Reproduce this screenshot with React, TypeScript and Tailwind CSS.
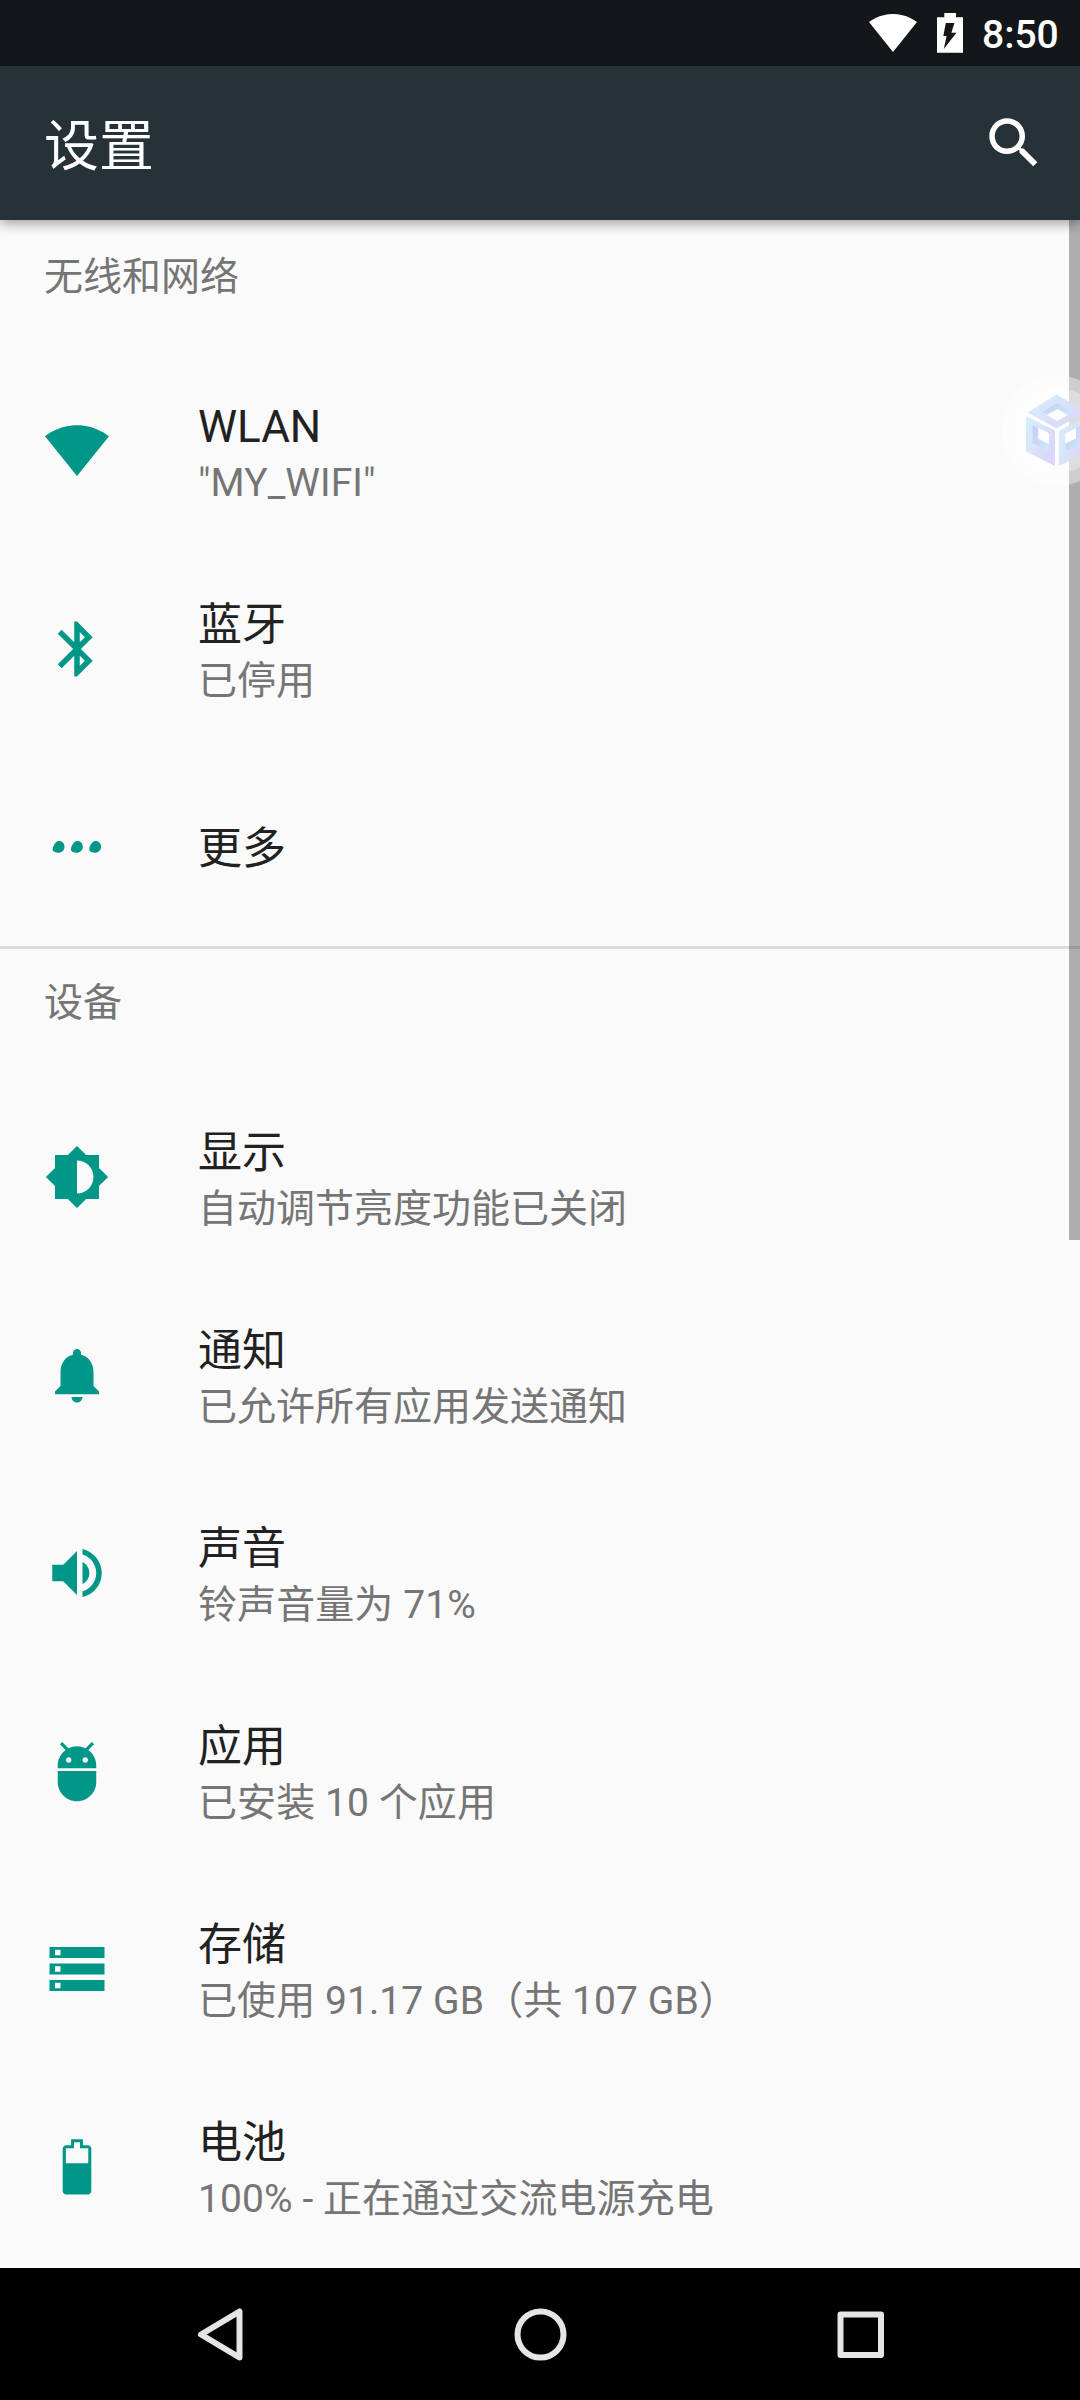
import React from 'react';

const P = {
  wifi: 'M12.01 21.49L23.64 7c-.45-.34-4.93-4-11.64-4C5.28 3 .81 6.66.36 7l11.63 14.49.01.01.01-.01z',
  bluetooth:
    'M17.71 7.71L12 2h-1v7.59L6.41 5 5 6.41 10.59 12 5 17.59 6.41 19 11 14.41V22h1l5.71-5.71-4.3-4.29 4.3-4.29zM13 5.83l1.88 1.88L13 9.59V5.83zm1.88 10.46L13 18.17v-3.76l1.88 1.88z',
  display:
    'M20 15.31L23.31 12 20 8.69V4h-4.69L12 .69 8.69 4H4v4.69L.69 12 4 15.31V20h4.69L12 23.31 15.31 20H20v-4.69zM12 18V6c3.31 0 6 2.69 6 6s-2.69 6-6 6z',
  more: 'M5.3 9.8C6.5 9.600 7.450 10.600 7.450 11.850S6.600 14.050 5.500 14.050C4.300 14.050 3.150 13.800 3.150 12.900C3.150 11.700 4.200 9.950 5.300 9.800zM11.950 9.800C13.150 9.600 14.100 10.600 14.100 11.850S13.250 14.050 12.150 14.050C10.950 14.050 9.800 13.800 9.800 12.900C9.800 11.700 10.850 9.950 11.950 9.800zM18.600 9.800C19.800 9.600 20.750 10.600 20.750 11.850S19.900 14.050 18.800 14.050C17.600 14.050 16.450 13.800 16.450 12.900C16.450 11.700 17.500 9.950 18.600 9.800z',
  bell: 'M12 22c1.1 0 2-.9 2-2h-4c0 1.1.89 2 2 2zm6-6v-5c0-3.07-1.64-5.64-4.5-6.32V4c0-.83-.67-1.5-1.5-1.5s-1.5.67-1.5 1.5v.68C7.63 5.36 6 7.92 6 11v5l-2 2v1h16v-1l-2-2z',
  sound:
    'M3 9v6h4l5 5V4L7 9H3zm13.5 3c0-1.77-1.02-3.29-2.5-4.03v8.05c1.48-.73 2.5-2.25 2.5-4.02zM14 3.23v2.06c2.89.86 5 3.54 5 6.71s-2.11 5.85-5 6.71v2.06c4.01-.91 7-4.49 7-8.77s-2.99-7.86-7-8.77z',
  apps: 'M5 16c0 3.87 3.13 7 7 7s7-3.13 7-7v-4H5v4zM16.12 4.37l2.1-2.1-.82-.83-2.3 2.31C14.16 3.28 13.12 3 12 3s-2.16.28-3.09.75L6.6 1.44l-.82.83 2.1 2.1C6.14 5.64 5 7.68 5 10v1h14v-1c0-2.32-1.14-4.36-2.88-5.63zM9 9c-.55 0-1-.45-1-1s.45-1 1-1 1 .45 1 1-.45 1-1 1zm6 0c-.55 0-1-.45-1-1s.45-1 1-1 1 .45 1 1-.45 1-1 1z',
  storage:
    'M2 20h20v-4H2v4zm2-3h2v2H4v-2zM2 4v4h20V4H2zm4 3H4V5h2v2zm-4 7h20v-4H2v4zm2-3h2v2H4v-2z',
  battery:
    'M15.9 4.1h-1.75V1.9h-4.3v2.2H8.1c-.7 0-1.3.6-1.3 1.3v15.4c0 .7.6 1.2 1.3 1.2h7.8c.7 0 1.3-.5 1.3-1.2V5.4c0-.7-.6-1.3-1.3-1.3zM16.1 10.6H7.95V5.2h2.95V3h2.2v2.2h3z',
};

type Item = { icon: keyof typeof P; title: string; sub?: string };
type Section = { name: string; items: Item[] };

const sections: Section[] = [
  {
    name: '无线和网络',
    items: [
      { icon: 'wifi', title: 'WLAN', sub: '"MY_WIFI"' },
      { icon: 'bluetooth', title: '蓝牙', sub: '已停用' },
      { icon: 'more', title: '更多' },
    ],
  },
  {
    name: '设备',
    items: [
      { icon: 'display', title: '显示', sub: '自动调节亮度功能已关闭' },
      { icon: 'bell', title: '通知', sub: '已允许所有应用发送通知' },
      { icon: 'sound', title: '声音', sub: '铃声音量为 71%' },
      { icon: 'apps', title: '应用', sub: '已安装 10 个应用' },
      { icon: 'storage', title: '存储', sub: '已使用 91.17 GB（共 107 GB）' },
      { icon: 'battery', title: '电池', sub: '100% - 正在通过交流电源充电' },
    ],
  },
];

function Row({ icon, title, sub }: Item) {
  // Summaries with Latin text carry a hair of extra tracking.
  const latin = !!sub && /[0-9A-Z]/.test(sub);
  return (
    <li className="flex h-[198px] pl-[44px]">
      <svg
        viewBox="0 0 24 24"
        className={icon === 'wifi' ? 'mt-[65px] size-[66px] shrink-0 fill-[#009688]' : 'mt-[66px] size-[66px] shrink-0 fill-[#009688]'}
      >
        <path fillRule="evenodd" d={P[icon]} />
      </svg>
      <div className={sub ? 'ml-[88px] pt-[49px]' : 'ml-[88px] pt-[75px]'}>
        <div className="text-[44px] leading-[52px] whitespace-nowrap text-[#212121]">{title}</div>
        {sub && (
          <div
            className={
              latin
                ? 'mt-[7px] text-[39px] leading-[46px] tracking-[0.08px] whitespace-nowrap text-[#757575]'
                : 'mt-[7px] text-[39px] leading-[46px] whitespace-nowrap text-[#757575]'
            }
          >
            {sub}
          </div>
        )}
      </div>
    </li>
  );
}

function StatusBar() {
  return (
    <div className="flex h-[66px] shrink-0 justify-end bg-[#131719] pr-[23px] text-white">
      <svg viewBox="0 0 48 38" className="mt-[14px] mr-[20px] h-[38px] w-[48px] fill-white">
        <path d="M24 38L48 8C47 7.3 37.8 0 24 0S1 7.3 0 8z" />
      </svg>
      <svg viewBox="0 0 26 40" className="mt-[13px] mr-[19px] h-[40px] w-[26px]">
        <path fill="#fff" d="M7.3 0h11.7v4.3h7v35.4H0V4.3h7.3z" />
        <path fill="#131719" d="M8.8 10H17.4L14.4 19.7H19.4L6.8 36L9.6 23H6.3z" />
      </svg>
      <div className="w-[75px] pt-[12px] text-[39px] leading-[46px] font-medium">8:50</div>
    </div>
  );
}

function FloatingBubble() {
  return (
    <div className="absolute top-[155px] left-[1001px] h-[112px] w-[79px] overflow-hidden">
      <svg viewBox="0 0 79 112" className="h-full w-full">
        <defs>
          <linearGradient id="face" x1="0" y1="0" x2="1" y2="0.6">
            <stop offset="0" stopColor="#d3f1fa" />
            <stop offset="1" stopColor="#dcd6f8" />
          </linearGradient>
          <linearGradient id="wall" x1="0" y1="0" x2="1" y2="0.8">
            <stop offset="0" stopColor="#c6caf5" />
            <stop offset="1" stopColor="#cbe8fa" />
          </linearGradient>
        </defs>
        <circle cx="56" cy="55.7" r="55.3" fill="#fff" opacity="0.4" />
        <circle cx="56" cy="55.7" r="43" fill="#fff" opacity="0.3" />
        <g fillRule="evenodd">
          <path fill="url(#face)" d="M55.7 19.5L84 36.500 55.700 53.500 26.500 37.500zM56.500 27.500L41 37l15 8.500L72 37z" />
          <path fill="url(#wall)" d="M56.500 27.500L41 37l6.500 3.500 9-6 9 6L72 37z" />
          <path fill="#fdfdfe" d="M56.500 34l10 6-10.500 6-10-6z" />
          <path fill="url(#face)" d="M25 41l29 14.500V91L25 76.500zM31.300 50v18.500L48 76.500V58.500z" />
          <path fill="url(#wall)" d="M31.300 50v18.500L48 76.500V68.500l-10.500-5V53z" />
          <path fill="#fdfdfe" d="M37.500 53L48 58.500V69l-10.500-5z" />
          <path fill="url(#face)" d="M58 55.500L87 41v35.500L58 91zM64.500 58.500v18L81 68.500V50z" />
          <path fill="url(#wall)" d="M64.500 76.500V68l10.500-5V53l6-3v18.500z" />
          <path fill="#fdfdfe" d="M64.500 58.500L75 53v10.500l-10.500 5z" />
        </g>
      </svg>
    </div>
  );
}

export default function App() {
  return (
    <div className="flex h-[2400px] w-[1080px] flex-col overflow-hidden bg-[#fafafa] font-['Roboto','Noto_Sans_CJK_SC',sans-serif]">
      <StatusBar />
      <header className="relative z-10 flex h-[154px] shrink-0 justify-between bg-[#263238] pr-[33px] pl-[44px] text-white shadow-[0_4px_11px_rgba(0,0,0,0.35)]">
        <h1 className="pt-[47px] text-[55px] leading-[66px]">设置</h1>
        <svg viewBox="0 0 24 24" className="mt-[44px] size-[66px] fill-white">
          <path d="M15.5 14h-.79l-.28-.27C15.41 12.59 16 11.11 16 9.5 16 5.91 13.09 3 9.5 3S3 5.91 3 9.5 5.91 16 9.5 16c1.61 0 3.09-.59 4.23-1.57l.27.28v.79l5 4.99L20.49 19l-4.99-5zm-6 0C7.01 14 5 11.99 5 9.5S7.01 5 9.5 5 14 7.01 14 9.5 11.99 14 9.5 14z" />
        </svg>
      </header>
      <main className="relative flex-1 overflow-hidden">
        {sections.map((s, i) => (
          <section key={s.name}>
            <h2
              className={
                i === 0
                  ? 'h-[132px] border-t-[3px] border-transparent pt-[31px] pl-[44px] text-[39px] leading-[46px] text-[#757575]'
                  : 'h-[132px] border-t-[3px] border-[#dbdbdb] pt-[31px] pl-[44px] text-[39px] leading-[46px] text-[#757575]'
              }
            >
              {s.name}
            </h2>
            <ul>
              {s.items.map((it) => (
                <Row key={it.title} {...it} />
              ))}
            </ul>
          </section>
        ))}
        <div className="absolute top-0 right-0 h-[1020px] w-[11px] bg-black/30" />
        <FloatingBubble />
      </main>
      <nav className="flex h-[132px] shrink-0 items-center justify-center gap-[240px] bg-black">
        <svg viewBox="0 0 80 80" className="size-[80px] fill-none stroke-[#e5e5e5]">
          <path strokeWidth="6" strokeLinejoin="round" d="M59.500 17.500v46L21 40.500z" />
        </svg>
        <svg viewBox="0 0 80 80" className="size-[80px] fill-none stroke-[#e5e5e5]">
          <circle strokeWidth="6" cx="40.500" cy="40.500" r="23" />
        </svg>
        <svg viewBox="0 0 80 80" className="size-[80px] fill-none stroke-[#e5e5e5]">
          <rect strokeWidth="6" strokeLinejoin="round" x="20.500" y="20.500" width="40.500" height="40.500" />
        </svg>
      </nav>
    </div>
  );
}
